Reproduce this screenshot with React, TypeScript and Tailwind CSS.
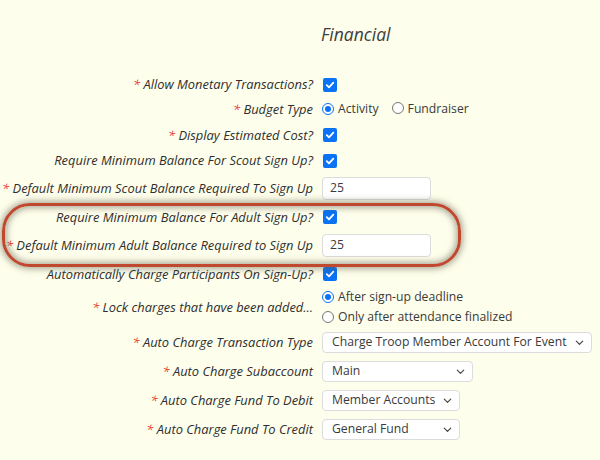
import React from "react";

function Check() {
  return (
    <span className="ml-[1px] inline-flex h-[14px] w-[14px] items-center justify-center rounded-[2px] bg-[#0a72f5]">
      <svg width="10" height="10" viewBox="0 0 10 10">
        <path d="M1.8 5.2 L4 7.4 L8.3 2.6" fill="none" stroke="white" strokeWidth="1.8" strokeLinecap="round" strokeLinejoin="round" />
      </svg>
    </span>
  );
}

function Radio({ on }: { on?: boolean }) {
  return on ? (
    <span className="inline-flex h-[12px] w-[12px] items-center justify-center rounded-full border-[1.5px] border-[#0a72f5] bg-white">
      <span className="h-[6px] w-[6px] rounded-full bg-[#0a72f5]" />
    </span>
  ) : (
    <span className="inline-block h-[12px] w-[12px] rounded-full border border-[#767676] bg-white" />
  );
}

function Label({ text, req }: { text: string; req?: boolean }) {
  return (
    <div className="flex w-[313px] shrink-0 justify-end whitespace-nowrap text-[12.9px] italic text-[#2e2e2e]">
      <span>
        {req && <span className="text-[#e8413b]">* </span>}
        {text}
      </span>
    </div>
  );
}

function Select({ value, w }: { value: string; w: string }) {
  return (
    <div className={`flex h-[21px] items-center justify-between rounded-[4px] border border-[#dcdcdc] bg-white pl-[9px] pr-[6px] text-[#3a3a3a] ${w}`}>
      <span>{value}</span>
      <svg width="11" height="11" viewBox="0 0 12 12">
        <path d="M2.5 4.5 L6 8 L9.5 4.5" fill="none" stroke="#444" strokeWidth="1.3" strokeLinecap="round" strokeLinejoin="round" />
      </svg>
    </div>
  );
}

function TextInput({ value }: { value: string }) {
  return (
    <div className="flex h-[23px] w-[109px] items-center rounded-[4px] border border-[#dcdcdc] bg-white pl-[7px] text-[#3a3a3a]">
      {value}
    </div>
  );
}

export default function App() {
  return (
    <div className="relative h-[460px] w-[600px] overflow-hidden bg-[#fefeec] font-['Open_Sans',sans-serif] text-[12.2px] leading-none">
      <div className="flex h-[72px] items-center pl-[321px] pb-[2px] text-[17.5px] italic text-[#3d3d3d]">Financial</div>
      <div className="flex flex-col">
        <div className="flex h-[25px] items-center gap-[9px]">
          <Label req text="Allow Monetary Transactions?" />
          <Check />
        </div>
        <div className="flex h-[25px] items-center gap-[9px]">
          <Label req text="Budget Type" />
          <div className="flex items-center text-[#3a3a3a]">
            <Radio on />
            <span className="ml-[4px]">Activity</span>
            <span className="ml-[13px]"><Radio /></span>
            <span className="ml-[4px]">Fundraiser</span>
          </div>
        </div>
        <div className="flex h-[26px] items-center gap-[9px]">
          <Label req text="Display Estimated Cost?" />
          <Check />
        </div>
        <div className="flex h-[25px] items-center gap-[9px]">
          <Label text="Require Minimum Balance For Scout Sign Up?" />
          <Check />
        </div>
        <div className="flex h-[31px] items-center gap-[9px]">
          <Label req text="Default Minimum Scout Balance Required To Sign Up" />
          <TextInput value="25" />
        </div>
        <div className="flex h-[26px] items-center gap-[9px]">
          <Label text="Require Minimum Balance For Adult Sign Up?" />
          <Check />
        </div>
        <div className="flex h-[31px] items-center gap-[9px]">
          <Label req text="Default Minimum Adult Balance Required to Sign Up" />
          <TextInput value="25" />
        </div>
        <div className="flex h-[26px] items-center gap-[9px]">
          <Label text="Automatically Charge Participants On Sign-Up?" />
          <Check />
        </div>
        <div className="flex h-[40px] items-center gap-[9px]">
          <Label req text="Lock charges that have been added..." />
          <div className="flex flex-col text-[#3a3a3a]">
            <div className="flex h-[20px] items-center">
              <Radio on />
              <span className="ml-[4px]">After sign-up deadline</span>
            </div>
            <div className="flex h-[20px] items-center">
              <Radio />
              <span className="ml-[4px]">Only after attendance finalized</span>
            </div>
          </div>
        </div>
        <div className="flex h-[30px] items-center gap-[9px]">
          <Label req text="Auto Charge Transaction Type" />
          <Select value="Charge Troop Member Account For Event" w="w-[270px]" />
        </div>
        <div className="flex h-[28px] items-center gap-[9px]">
          <Label req text="Auto Charge Subaccount" />
          <Select value="Main" w="w-[151px]" />
        </div>
        <div className="flex h-[30px] items-center gap-[9px]">
          <Label req text="Auto Charge Fund To Debit" />
          <Select value="Member Accounts" w="w-[138px]" />
        </div>
        <div className="flex h-[28px] items-center gap-[9px]">
          <Label req text="Auto Charge Fund To Credit" />
          <Select value="General Fund" w="w-[138px]" />
        </div>
      </div>
      <div className="pointer-events-none absolute left-[2px] top-[203px] h-[64px] w-[459px] rounded-[28px] border-[3px] border-[#c0482f] shadow-[0_0_6px_2px_rgba(90,90,70,0.5),inset_0_0_6px_2px_rgba(90,90,70,0.5)]" />
    </div>
  );
}
